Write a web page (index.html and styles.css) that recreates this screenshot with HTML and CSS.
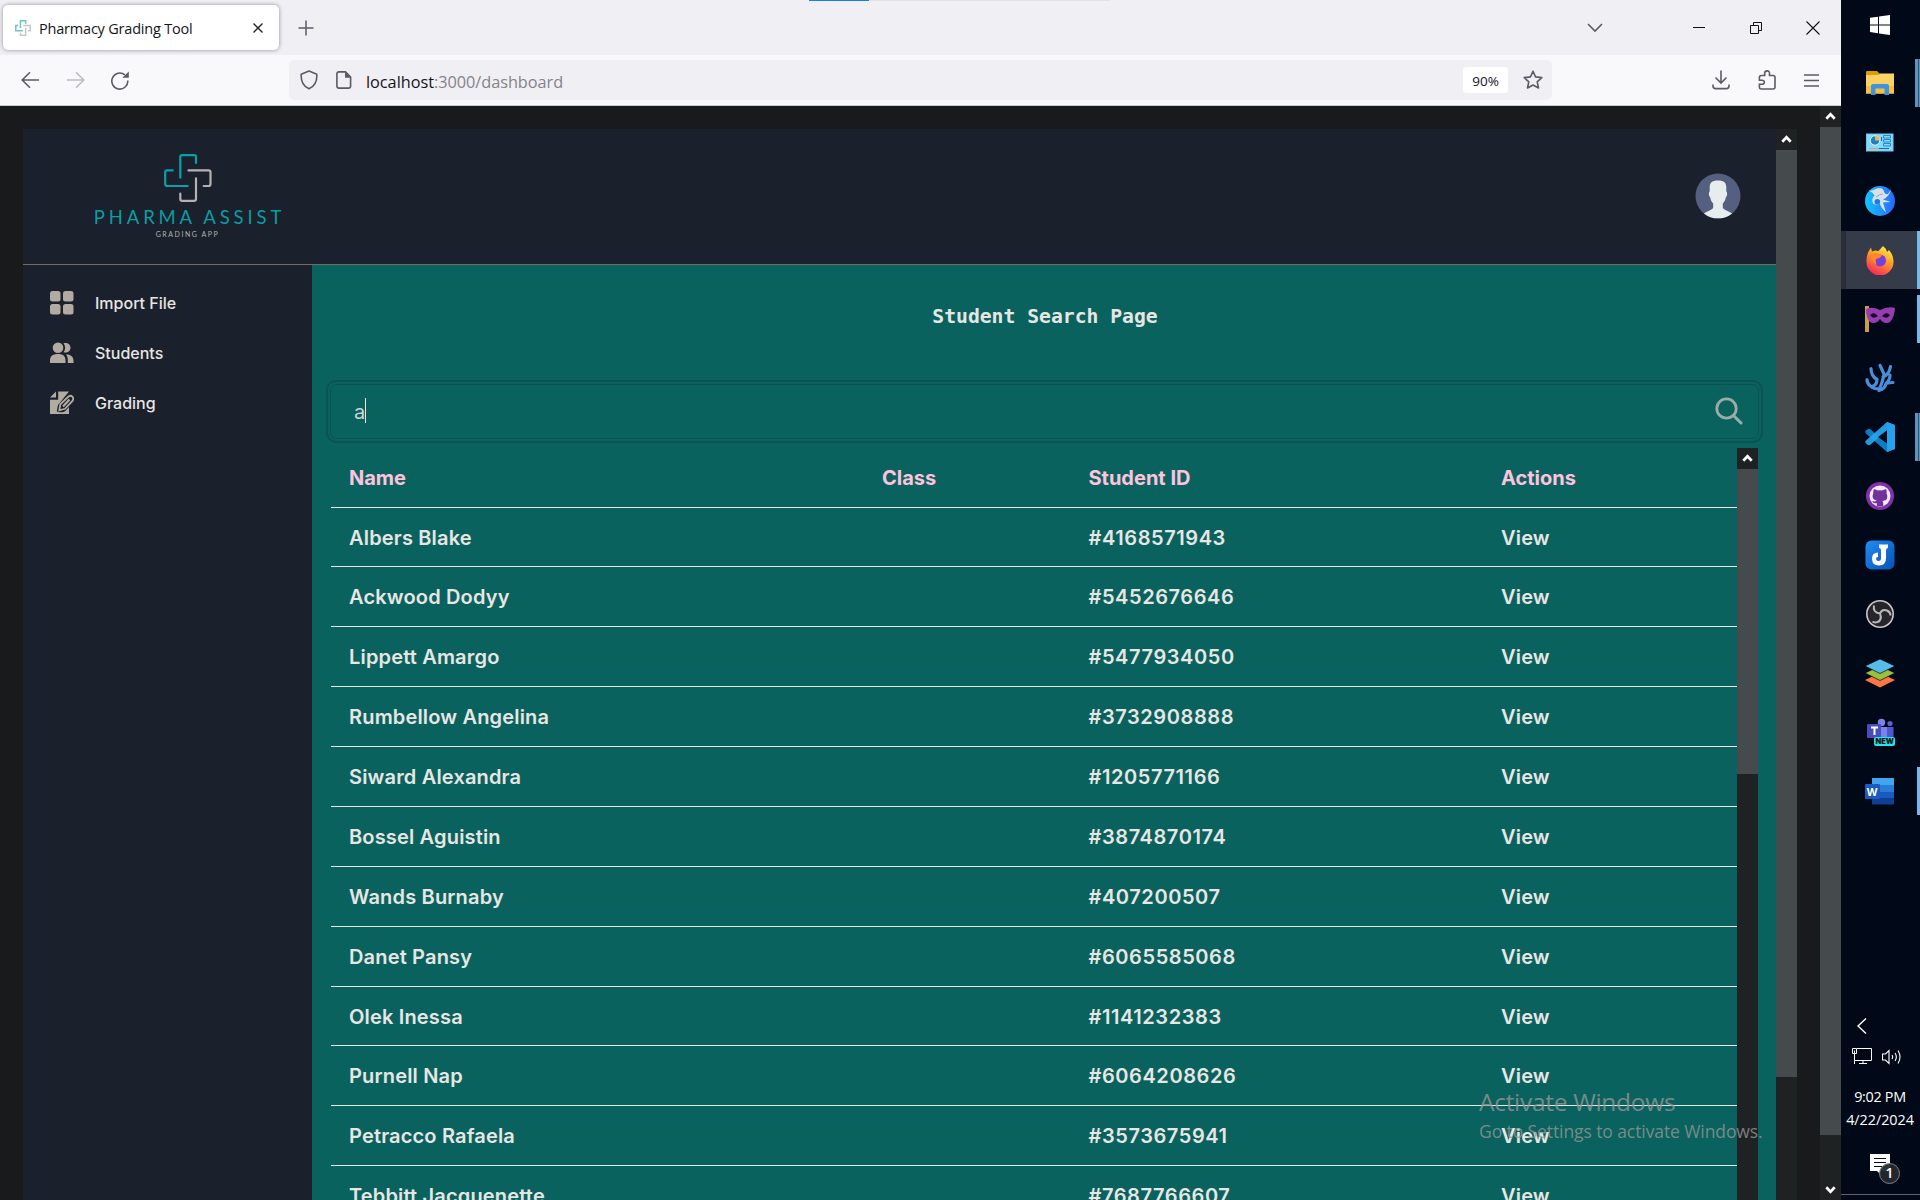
FILE: index.html
```html
<!DOCTYPE html>
<html lang="en">
<head>
<meta charset="utf-8">
<title>Pharmacy Grading Tool</title>
<link rel="stylesheet" href="styles.css">
</head>
<body>
<svg class="defs" width="0" height="0" aria-hidden="true">
  <defs>
    <symbol id="cross" viewBox="0 0 48 48">
      <g fill="none" stroke-width="2.2" stroke-linecap="round" stroke-linejoin="round">
        <path stroke="#0aa0a7" d="M32 9V3Q32 1.200 30.200 1.200H18Q16.300 1.200 16.300 3V23.700M8.700 16.400H3Q1.200 16.400 1.200 18.200V30Q1.200 32 3.200 32H23.700"/>
        <path stroke="#b4b2b0" d="M24.500 16.400H44.500Q46.500 16.400 46.500 18.200V30Q46.500 32 44.500 32H39.700M32 24.300V45Q32 46.900 30 46.900H18.200Q16.300 46.900 16.300 45V39.500"/>
      </g>
    </symbol>
    <symbol id="up" viewBox="0 0 21 21"><path d="M6.300 12.700L10.500 8.300L14.700 12.700" fill="none" stroke="#fff" stroke-width="2.700"/></symbol>
  </defs>
</svg>
<div class="desktop">
  <div class="browser">
    <div class="tabbar">
      <div class="loading"><i></i><b></b></div>
      <div class="tab">
        <svg class="favicon" width="16" height="16" viewBox="0 0 48 48"><g fill="none" stroke-width="4.500"><path stroke="#0aa0a7" d="M32 11V2.300H16.300V23.700M9 16.400H2.300V32H23.700"/><path stroke="#a5a3a1" d="M24.500 16.400H45.700V32H39M32 24.300V45.700H16.300V38"/></g></svg>
        <span class="tab-title">Pharmacy Grading Tool</span>
        <svg class="tab-close" width="12" height="12" viewBox="0 0 12 12"><path d="M1.500 1.500l9 9M10.500 1.500l-9 9" stroke="#222" stroke-width="1.400"/></svg>
      </div>
      <svg class="newtab" width="16" height="16" viewBox="0 0 16 16"><path d="M8 .5v15M.5 8h15" stroke="#5b5b66" stroke-width="1.500"/></svg>
      <div class="winbtns">
        <svg width="16" height="10" viewBox="0 0 16 10"><path d="M1 1l7 7 7-7" fill="none" stroke="#5b5b66" stroke-width="1.600"/></svg>
        <svg class="min" width="12" height="12"><path d="M0 5.500h12" stroke="#111"/></svg>
        <svg class="restore" width="12" height="12"><path d="M.5 3.500h8v8h-8zM3.500 3.500v-3h8v8h-3" fill="none" stroke="#111"/></svg>
        <svg class="close" width="14" height="14" viewBox="0 0 14 14"><path d="M.5 .5l13 13M13.500 .5l-13 13" stroke="#111" stroke-width="1.100"/></svg>
      </div>
    </div>
    <div class="toolbar">
      <svg class="back" width="18" height="18" viewBox="0 0 18 18"><path d="M18 9H1.500M9 1.300L1.200 9l7.800 7.700" fill="none" stroke="#5b5b66" stroke-width="1.600"/></svg>
      <svg class="fwd" width="18" height="18" viewBox="0 0 18 18"><path d="M0 9h16.500M9 1.300L16.800 9 9 16.700" fill="none" stroke="#bcbbc2" stroke-width="1.600"/></svg>
      <svg class="reload" width="20" height="20" viewBox="0 0 20 20"><path d="M17.800 9.500A8 8 0 1 1 14.800 3.800" fill="none" stroke="#5b5b66" stroke-width="1.600" transform="translate(0 1)"/><path d="M18.800 1.500v6.300h-6.500z" fill="#5b5b66"/></svg>
      <div class="urlbar">
        <svg class="shield" width="18" height="20" viewBox="0 0 18 20"><path d="M9 1.100L16.800 4.200C17.200 11 14.500 16.500 9 18.800 3.500 16.500 .8 11 1.200 4.200Z" fill="none" stroke="#5b5b66" stroke-width="1.600" stroke-linejoin="round"/></svg>
        <svg class="doc" width="16" height="18" viewBox="0 0 16 18"><path d="M9.500 .9H3Q.9 .9 .9 3V15Q.9 17.100 3 17.100H12.500Q14.600 17.100 14.600 15V6Z" fill="none" stroke="#5b5b66" stroke-width="1.600"/><path d="M9 .5v6.200h6.200z" fill="#5b5b66"/></svg>
        <span class="url">localhost<em>:3000/dashboard</em></span>
        <span class="zoom">90%</span>
        <svg class="star" width="20" height="20" viewBox="0 0 20 20"><path d="M10 1.200l2.500 5.700 6.300.7-4.600 4.200 1.300 6.200L10 15l-5.500 3 1.300-6.200L1.200 7.600l6.300-.7z" fill="none" stroke="#5b5b66" stroke-width="1.600" stroke-linejoin="round"/></svg>
      </div>
      <svg class="download" width="18" height="20" viewBox="0 0 18 20"><path d="M9 .5v12.300M3.500 7.500L9 13l5.500-5.500M1 14.500v1.500q0 2.600 2.600 2.600h10.800q2.600 0 2.600-2.600v-1.500" fill="none" stroke="#5b5b66" stroke-width="1.600"/></svg>
      <svg class="puzzle" width="18" height="20" viewBox="0 0 18 20"><path d="M6.700 5.500V3.300q0-2.400 2.400-2.400t2.400 2.400V5.500H15q2 0 2 2V17q0 2-2 2H3.300Q1.400 19 1.400 17V14.300H4q2.300 0 2.300-2t-2.300-2H1.400V7.500q0-2 2-2z" fill="none" stroke="#5b5b66" stroke-width="1.600"/></svg>
      <svg class="burger" width="15" height="13" viewBox="0 0 15 13"><path d="M0 1h15M0 6.500h15M0 12h15" stroke="#5b5b66" stroke-width="1.500"/></svg>
    </div>
    <div class="viewport">
      <div class="outer">
        <div class="app">
          <header class="header">
            <div class="brand">
              <svg width="48" height="48"><use href="#cross"/></svg>
              <span class="brand-name">PHARMA ASSIST</span>
              <span class="brand-sub">GRADING APP</span>
            </div>
            <svg class="avatar" width="46" height="46" viewBox="0 0 46 46"><circle cx="23" cy="23" r="22.500" fill="#556080"/><path d="M23 7.500c6.300 0 8.300 2.500 8.300 7v4c1.300.7 1 4.600-.5 5.700-.4 3-1.500 4.800-3 6.300v3.700c0 2.800 6.500 4 9.300 6.200A22.500 22.500 0 0 1 8.900 40.400c2.800-2.200 9.300-3.400 9.300-6.200v-3.700c-1.500-1.500-2.600-3.300-3-6.300-1.500-1.100-1.800-5-.5-5.700v-4c0-4.500 2-7 8.300-7z" fill="#e7eced"/></svg>
          </header>
          <div class="body">
            <nav class="side">
              <a><svg width="24" height="24" viewBox="0 0 24 24" fill="#b2aba1"><rect x="0" y="0" width="10.500" height="10.500" rx="2.500"/><rect x="13" y="0" width="10.500" height="10.500" rx="2.500"/><rect x="0" y="13" width="10.500" height="10.500" rx="2.500"/><rect x="13" y="13" width="10.500" height="10.500" rx="2.500"/></svg>Import File</a>
              <a><svg width="24" height="24" viewBox="0 0 24 24" fill="#b2aba1"><circle cx="8" cy="6.700" r="5.300"/><path d="M0 22v-2.500C0 15 3 13 8 13s7.500 2 7.500 6.500V22zM13.500 11.300c2.200-2.600 2.200-6.300 0-9 4-1 7 1.300 7 4.500s-3 5.500-7 4.500zM16 13.600c4.600-.3 7.500 2 7.500 6.400v2h-5.700v-2.500c0-2.600-.5-4.500-1.800-5.900z"/></svg>Students</a>
              <a><svg width="24" height="24" viewBox="0 0 24 24" fill="#b2aba1"><path d="M0 6.500L6 .5v6zM8.200 .5H19L8 14l-1.200 6.200c1.500 1.600 7 1.500 8.500-.2L19 16v7H0V8.700h8.200z"/><path d="M9.300 19.300l1-6L18.500 5.500q2.200-1.500 3.800.2t.4 3.900L15 17.800z" fill="none" stroke="#b2aba1" stroke-width="1.800"/><path d="M13 15.500l6.500-7" stroke="#b2aba1" stroke-width="2.300"/></svg>Grading</a>
            </nav>
            <main class="main">
              <h1>Student Search Page</h1>
              <div class="search">
                <div class="field"><span class="query">a</span><i class="caret"></i>
                  <svg width="28" height="28" viewBox="0 0 28 28"><circle cx="11.500" cy="11.500" r="9.700" fill="none" stroke="#99aca5" stroke-width="2.800"/><path d="M18.500 18.500l7.500 7.500" stroke="#99aca5" stroke-width="3" stroke-linecap="round"/></svg>
                </div>
              </div>
              <div class="results">
                <div class="table">
                  <div class="row head"><span>Name</span><span>Class</span><span>Student ID</span><span>Actions</span></div>
                  <div class="row short"><span>Albers Blake</span><span></span><span class="id">#4168571943</span><span>View</span></div>
                  <div class="row"><span>Ackwood Dodyy</span><span></span><span class="id">#5452676646</span><span>View</span></div>
                  <div class="row"><span>Lippett Amargo</span><span></span><span class="id">#5477934050</span><span>View</span></div>
                  <div class="row"><span>Rumbellow Angelina</span><span></span><span class="id">#3732908888</span><span>View</span></div>
                  <div class="row"><span>Siward Alexandra</span><span></span><span class="id">#1205771166</span><span>View</span></div>
                  <div class="row"><span>Bossel Aguistin</span><span></span><span class="id">#3874870174</span><span>View</span></div>
                  <div class="row"><span>Wands Burnaby</span><span></span><span class="id">#407200507</span><span>View</span></div>
                  <div class="row"><span>Danet Pansy</span><span></span><span class="id">#6065585068</span><span>View</span></div>
                  <div class="row short"><span>Olek Inessa</span><span></span><span class="id">#1141232383</span><span>View</span></div>
                  <div class="row"><span>Purnell Nap</span><span></span><span class="id">#6064208626</span><span>View</span></div>
                  <div class="row"><span>Petracco Rafaela</span><span></span><span class="id">#3573675941</span><span>View</span></div>
                  <div class="row"><span>Tebbitt Jacquenette</span><span></span><span class="id">#7687766607</span><span>View</span></div>
                </div>
                <div class="scroll"><svg width="21" height="21"><use href="#up"/></svg><div class="thumb thumb-table"></div></div>
              </div>
            </main>
          </div>
        </div>
        <div class="scroll"><svg width="21" height="21"><use href="#up"/></svg><div class="thumb thumb-app"></div></div>
      </div>
      <div class="scroll"><svg width="21" height="21"><use href="#up"/></svg><div class="thumb thumb-page"></div><svg class="down" width="21" height="21"><use href="#up"/></svg></div>
    </div>
  </div>

  <aside class="taskbar">
    <div class="cell start"><svg width="20" height="20" viewBox="0 0 20 20" fill="#fff"><path d="M0 2.800L8 1.700V9.400H0zM9 1.500L20 0V9.400H9zM0 10.400H8V18.200L0 17.100zM9 10.400H20V20L9 18.400z"/></svg></div>
    <div class="cell"><svg width="30" height="30" viewBox="0 0 30 30"><path d="M1 4q0-1 1-1h10l2.500 2.500V10H1z" fill="#e09b05"/><path d="M1 7h12l2-1.500h14V25.500H1z" fill="#fdd264"/><path d="M1 18h28v7.500H1z" fill="#f6c044"/><path d="M6 27V18q0-2 2-2h14q2 0 2 2v9h-4.500v-6.500h-9V27z" fill="#3f94dc"/></svg><i class="open double"></i></div>
    <div class="cell"><svg width="30" height="30" viewBox="0 0 30 30"><rect x="1" y="6.500" width="27.500" height="18" fill="#6cc8f5"/><rect x="2" y="7.500" width="25.500" height="16" fill="#86d8fc"/><circle cx="10" cy="13.500" r="4.700" fill="#1c82c8" stroke="#e7f7ff"/><path d="M10 13.500V8.800a4.700 4.700 0 0 1 4.700 4.700z" fill="#f6b348"/><path d="M18.500 8.500h7v2.500h-7zM18.500 12.500h7V15h-7zM18.500 16.500h7V19h-7z" fill="none" stroke="#2989c9"/><path d="M4 21.500h10" stroke="#e6a23c"/><path d="M14 21.500h10M16.500 10v4" stroke="#146cab"/></svg></div>
    <div class="cell"><svg width="30" height="30" viewBox="0 0 30 30"><defs><linearGradient id="g1" x1="0" y1="0" x2="1" y2="0"><stop stop-color="#12c5ff"/><stop offset="1" stop-color="#2867ff"/></linearGradient></defs><circle cx="15" cy="15" r="15" fill="url(#g1)"/><path d="M4 4.500C9 5.500 10 1.500 16.500 2.500 20 4 18 6.500 21 8q2 1.500 5-5-1 7-8 10.500l8 2.500q-5 0-8 .5 1.500 5 3 10Q16 22 14.500 17.500 12 20 8 17.500 6 13 9.500 9.500 8.500 7 4 4.500z" fill="#d9e0e7"/><circle cx="12.300" cy="15.700" r="2.800" fill="#1c79e6"/><path d="M11 11q4-3 7-3" fill="none" stroke="#8e9aaa" stroke-width=".8"/></svg></div>
    <div class="cell active"><svg width="30" height="30" viewBox="0 0 30 30"><defs><linearGradient id="g2" x1=".8" y1="0" x2=".3" y2="1"><stop stop-color="#fff04a"/><stop offset=".45" stop-color="#ff9a25"/><stop offset="1" stop-color="#f92160"/></linearGradient></defs><path d="M6 2.500l1 4 3-1 3.500.5L18 1q3 2 4 6l2-2q5 6 4.500 12A13.500 13.500 0 0 1 1.500 17Q1 9 6 2.500z" fill="url(#g2)"/><circle cx="15" cy="15.500" r="6" fill="#7540df"/><path d="M7.500 9q3-2 6.500 0l3 1.500q-2 3-6 3.500-1 3 1 6-6-2-4.500-11z" fill="#ff8a25"/></svg><i class="open"></i></div>
    <div class="cell"><svg width="30" height="30" viewBox="0 0 30 30"><path d="M0 2h4v26H0z" fill="#c8a044"/><path d="M1 5q6-3 14 1 8-4 15-2-.5 9-5 14-6 3-10-3-4 6-10 3Q1 14 1 5z" fill="#963db2"/><path d="M5 11q4-4 8 1-5 4-8-1zM17 12q4-5 8-1-3 5-8 1z" fill="#180823"/></svg><i class="open"></i></div>
    <div class="cell"><svg width="30" height="30" viewBox="0 0 30 30"><path d="M14 26C7 26 2 21.500 2 16.500M7 23.500Q12 22 12 16.500 6 13 6 5.500M14 27.500Q20 26 21 20.500 25 19.500 28 19.500M14 27Q18 18 19 11L15 2.500M18 14Q24 12 25.500 3.500M21 20.500Q25 17 25 12" fill="none" stroke="#488ed8" stroke-width="3.200" stroke-linecap="round" stroke-linejoin="round"/></svg></div>
    <div class="cell"><svg width="30" height="30" viewBox="0 0 30 30"><path d="M22 0L30 3V27L22 30 1 11.500Q-.5 10 1 8.500L3 7q1-.7 2 0L22 21z" fill="#0c7fc4"/><path d="M22 0L30 3V27L22 30V8.500L5 23q-1 .7-2 0L1 21.500Q-.5 20 1 18.500z" fill="#29a5ef" fill-opacity=".92"/><path d="M22 8.500L13 15l9 6.500z" fill="#020817"/></svg><i class="open double"></i></div>
    <div class="cell"><svg width="30" height="30" viewBox="0 0 30 30"><circle cx="15" cy="15" r="14" fill="#8132aa"/><circle cx="15" cy="15" r="10.500" fill="#f3e9f7"/><path d="M9 8l4 1.500q2-.5 4 0L21 8q1 2 .5 4 3 7-4 8 1 1 .8 5h-6.500v-3q-4 1-4.500-2 3 1 4.500-.5-6-1-3.500-7.500Q8 10 9 8z" fill="#70319c"/></svg></div>
    <div class="cell"><svg width="30" height="30" viewBox="0 0 30 30"><defs><linearGradient id="g3" x1="0" y1="0" x2="1" y2="1"><stop stop-color="#208cf5"/><stop offset="1" stop-color="#0752b4"/></linearGradient></defs><rect x=".5" y=".5" width="29" height="29" rx="6" fill="url(#g3)"/><path d="M14 4.500h9v3.500q-2 0-2 2v8q0 7.500-7 7.500-7 0-7-7 0-6 6-6v4.500q-2 0-2 2t2.500 2q2.500 0 2.500-3V10q0-2-2-2z" fill="#fff"/></svg></div>
    <div class="cell"><svg width="30" height="30" viewBox="0 0 30 30"><circle cx="15" cy="15" r="13.200" fill="#262527" stroke="#c9c7ca" stroke-width="1.600"/><path d="M9 6.500q-1.500 7 6 8Q17 9.500 22 11.500q3.500 1.500 3.500 5M15 14.500Q17.500 21 12.500 23q-3 1-5-.5" fill="none" stroke="#bab8bb" stroke-width="2"/></svg></div>
    <div class="cell"><svg width="30" height="30" viewBox="0 0 30 30"><path d="M0 22L15 15l15 7-15 7.500z" fill="#ff7543"/><path d="M0 15L15 8l15 7-15 7.500z" fill="#9ac13b" stroke="#020817" stroke-width=".7"/><path d="M0 8L15 1l15 7-15 7.500z" fill="#58bce9" stroke="#020817" stroke-width=".7"/></svg></div>
    <div class="cell teams"><svg width="30" height="30" viewBox="0 0 30 30"><circle cx="16.500" cy="4.500" r="3.700" fill="#7b83eb"/><circle cx="25" cy="5.500" r="2.600" fill="#5a60cf"/><path d="M11 9h12v13H11z" fill="#7b83eb"/><path d="M22 9h6.500v11H22z" fill="#5059c9"/><rect x="2" y="6" width="14" height="14" rx="1" fill="#484cbd"/><path d="M6 9.500h7M9.500 9.500V17" stroke="#fff" stroke-width="2"/><rect x="9" y="19" width="21" height="9" rx="2" fill="#24e5ea"/><text x="10.500" y="26.200" class="new">NEW</text></svg></div>
    <div class="cell"><svg width="30" height="30" viewBox="0 0 30 30"><path d="M7 2h22v7H7z" fill="#41a5ee"/><path d="M7 9h22v7H7z" fill="#2b7cd3"/><path d="M7 16h22v6H7z" fill="#185abd"/><path d="M7 22h22v6.500H7z" fill="#103f91"/><rect x="0" y="8" width="15" height="15" rx="1" fill="#1b5bbe"/><text x="1.800" y="19.700" class="word">W</text></svg><i class="open"></i></div>
    <div class="tray">
      <svg class="chev" width="11" height="16" viewBox="0 0 11 16"><path d="M10 .5L2 8l8 7.500" fill="none" stroke="#fff" stroke-width="1.400"/></svg>
      <div class="status">
        <svg width="20" height="17" viewBox="0 0 20 17"><path d="M5 .5h14.500v12H2.500V16M.5 .5h4v5h-4zM2.500 2.500v10M11 12.500v3M7 15.500h8" fill="none" stroke="#fff"/></svg>
        <svg width="21" height="18" viewBox="0 0 21 18"><path d="M.5 6h3L7 2.500v13L3.500 12h-3zM10 7q1.300 2 0 4M13 5q2.700 4 0 8M16 2.500q4 6.500 0 13" fill="none" stroke="#fff" stroke-width="1.100"/></svg>
      </div>
      <div class="clock"><span>9:02 PM</span><span class="date">4/22/2024</span></div>
      <svg class="note" width="32" height="32" viewBox="0 0 32 32"><path d="M1 1h20v17h-9v4l-4-4H1z" fill="#fff"/><path d="M5 5.500h12M5 9.500h12M5 13.500h8" stroke="#010817"/><circle cx="20.500" cy="20.500" r="10" fill="#24282f" fill-opacity=".95" stroke="#7f8287"/><text x="20.500" y="25.300" text-anchor="middle" class="count">1</text></svg>
      <div class="peek"></div>
    </div>
  </aside>
  <div class="watermark"><p class="wm1">Activate Windows</p><p class="wm2">Go to Settings to activate Windows.</p></div>
</div>
</body>
</html>
```
FILE: styles.css
```css
* { box-sizing: border-box; }
body { margin: 0; font-family: "Open Sans", "Noto Sans", sans-serif; overflow: hidden; }
svg { display: block; flex: none; }
.defs { position: absolute; }
.desktop { position: relative; display: flex; width: 1920px; height: 1200px; overflow: hidden; }

/* Browser chrome */
.browser { width: 1841px; display: flex; flex-direction: column; }
.tabbar { position: relative; height: 55px; background: #f0eff4; display: flex; align-items: flex-start; padding: 5px 0 0 3px; }
.loading { position: absolute; left: 809px; top: 0; display: flex; }
.loading i { width: 60px; height: 1px; background: #1481e0; }
.loading b { width: 241px; height: 1px; background: #e3e2e5; }
.tab { width: 276px; height: 45px; background: #fff; border-radius: 5px; box-shadow: 0 0 4px rgba(0,0,0,.4); display: flex; align-items: center; padding: 0 15px 0 12px; }
.favicon { opacity: .6; margin-top: 1px; }
.tab-title { margin-left: 8px; padding-top: 2px; flex: 1; font-size: 14.5px; color: #15141a; letter-spacing: -.2px; white-space: nowrap; }
.newtab { margin: 15px 0 0 19px; }
.winbtns { margin-left: auto; padding: 16px 21px 0 0; height: 29px; display: flex; align-items: center; }
.min { margin-left: 90px; }
.restore { margin-left: 45px; }
.close { margin-left: 44px; }
.toolbar { height: 51px; background: #f9f9fb; border-bottom: 1px solid #cbcbd0; display: flex; align-items: center; padding-left: 21px; }
.back { margin-right: 28px; }
.reload { margin-left: 25px; }
.urlbar { margin-left: 159px; width: 1263px; height: 40px; border-radius: 5px; background: #f0eff4; display: flex; align-items: center; padding: 0 9px 0 11px; }
.doc { margin-left: 18px; }
.url { margin-left: 14px; padding-top: 4px; font-size: 16.300px; color: #15141a; white-space: nowrap; letter-spacing: -.03px; }
.url em { font-style: normal; color: #84838a; }
.zoom { margin-left: auto; width: 45px; height: 26px; line-height: 28px; background: #fff; border-radius: 4px; text-align: center; font-size: 13.500px; color: #15141a; }
.star { margin-left: 15px; }
.download { margin-left: 160px; }
.puzzle { margin-left: 28px; }
.burger { margin-left: 28px; }

/* Scrollbars */
.scroll { width: 21px; flex: none; background: #1f2223; display: flex; flex-direction: column; }
.thumb { background: #454a4d; }
.thumb-table { height: 305px; }
.thumb-app { height: 927px; }
.thumb-page { height: 1008px; }
.down { margin-top: auto; transform: rotate(180deg); }

/* Page */
.viewport { height: 1094px; display: flex; background: #181a1b; }
.outer { flex: 1; display: flex; padding: 23px 23px 0; }
.app { flex: 1; display: flex; flex-direction: column; min-width: 0; height: 1071px; overflow: hidden; }
.header { height: 136px; flex: none; background: #1a212c; border-bottom: 1px solid #736b5e; display: flex; justify-content: space-between; align-items: flex-start; padding: 25px 35px 0 71px; }
.brand { display: flex; flex-direction: column; align-items: center; width: 188px; padding-right: 1px; }
.brand-name { margin-top: 3px; margin-right: -4px; font: 400 18.500px/24px Lato, sans-serif; letter-spacing: 3.850px; color: #0a9da4; white-space: nowrap; }
.brand-sub { font: 400 7px/10px Lato, sans-serif; letter-spacing: 1.550px; color: #b4b2b0; white-space: nowrap; }
.avatar { margin-top: 19px; }
.body { flex: 1; display: flex; min-height: 0; }
.side { width: 289px; background: #1a212c; padding: 13px 0 0 27px; }
.side a { display: flex; align-items: center; gap: 21px; height: 50px; font: 500 16px Inter, sans-serif; color: #e8e6e3; }
.main { flex: 1; min-width: 0; background: #0a625f; padding: 0 13px 0 15px; }
h1 { margin: 0; padding-top: 39px; height: 115px; text-align: center; font: bold 19.720px/26px "DejaVu Sans Mono", monospace; color: #e8e6e3; }
.search { height: 63px; margin-left: -1px; border: 2px solid #0b5350; border-radius: 10px; padding: 2px; }
.field { height: 55px; border: 1px solid #0b5350; border-radius: 6px; display: flex; align-items: center; padding: 0 15px 2px 23px; font: 400 20px Inter, sans-serif; color: #ccd5d0; }
.query { padding-top: 2px; }
.caret { width: 1px; height: 25px; background: #e8e6e3; }
.field svg { margin-left: auto; }
.results { display: flex; margin: 5px 5px 0 4px; height: 752px; overflow: hidden; }
.table { flex: 1; font: 600 20px Inter, sans-serif; letter-spacing: .17px; color: #e8e6e3; }
.row { display: grid; grid-template-columns: 533px 206.500px 412.500px 1fr; align-items: center; height: 60px; border-bottom: 1px solid #e8e6e3; padding: 1px 0 0 18px; }
.row.short { height: 59px; }
.head { color: #ffc3dc; font-weight: 700; letter-spacing: 0; }
.id { letter-spacing: .58px; }

/* Taskbar */
.taskbar { width: 79px; background: #010817; display: flex; flex-direction: column; }
.cell { position: relative; height: 59px; flex: none; display: flex; align-items: center; justify-content: center; padding-right: 1px; }
.start { height: 53px; padding-bottom: 3px; }
.active { background: #353b48; border-left: 5px solid #292e3a; padding-right: 6px; height: 58px; margin-top: 1px; }
.teams { padding-top: 3px; }
.open { position: absolute; right: 0; top: 6px; width: 3px; height: 48px; background: #76b9ed; }
.double { width: 5px; background: linear-gradient(90deg, #5f93bc 3px, #2f5473 3px, #2f5473 4px, #5f93bc 4px); }
.active .open { top: 0; height: 58px; }
.new { font: 900 7.500px Inter, sans-serif; fill: #07171e; }
.word { font: 700 11px "Open Sans", sans-serif; fill: #fff; }
.tray { margin-top: auto; height: 182px; display: flex; flex-direction: column; color: #fff; }
.chev { margin-left: 15px; }
.status { display: flex; gap: 10px; margin: 14px 0 0 11px; }
.clock { margin-top: 20px; padding-right: 1px; display: flex; flex-direction: column; align-items: center; font-size: 14.400px; line-height: 22px; letter-spacing: -.3px; }
.clock .date { letter-spacing: -.05px; padding-top: 1px; }
.note { margin: 22px 0 0 28px; }
.count { font: 600 14px "Open Sans", sans-serif; fill: #fff; }
.peek { margin-top: auto; height: 6px; flex: none; border-top: 1px solid #5d626c; }

.watermark { position: absolute; left: 1479px; top: 1084px; color: rgba(150,150,150,.8); white-space: nowrap; }
.watermark p { margin: 0; }
.wm1 { font-size: 24.500px; line-height: 36px; letter-spacing: -.3px; }
.wm2 { font-size: 17.500px; line-height: 22px; letter-spacing: -.09px; }
```
